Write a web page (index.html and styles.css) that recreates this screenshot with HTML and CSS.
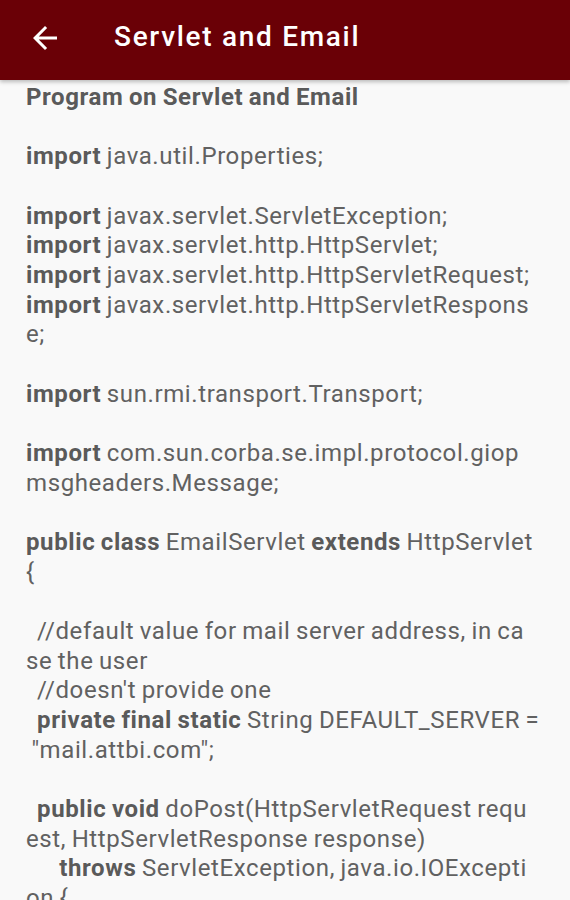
FILE: index.html
```html
<!DOCTYPE html>
<html>
    <head>
        <title>Servlet and Email</title>
        <link rel="stylesheet" href="styles.css">
    </head>
    <body>
        <div class="app-bar">
            <button class="back-btn" aria-label="Back">
                <svg viewBox="0 0 24 24" fill="currentColor" aria-hidden="true">
                    <path d="M20 11H7.83l5.59-5.59L12 4l-8 8 8 8 1.41-1.41L7.83 13H20v-2z" />
                </svg>
            </button>
            <h1 class="title">Servlet and Email</h1>
        </div>

        <div class="content">
<pre class="program"><b>Program on Servlet and Email</b>

<b>import</b> java.util.Properties;

<b>import</b> javax.servlet.ServletException;
<b>import</b> javax.servlet.http.HttpServlet;
<b>import</b> javax.servlet.http.HttpServletRequest;
<b>import</b> javax.servlet.http.HttpServletRespons
e;

<b>import</b> sun.rmi.transport.Transport;

<b>import</b> com.sun.corba.se.impl.protocol.giop
msgheaders.Message;

<b>public class</b> EmailServlet <b>extends</b> HttpServlet
{

  //default value for mail server address, in ca
se the user
  //doesn't provide one
  <b>private final static</b> String DEFAULT_SERVER =
 "mail.attbi.com";

  <b>public void</b> doPost(HttpServletRequest requ
est, HttpServletResponse response)
      <b>throws</b> ServletException, java.io.IOExcepti
on {</pre>
        </div>
    </body>
</html>
```

FILE: styles.css
```css
:root {
    --bar-red: #6a0006;
    --bg: #f9f9f9;
    --text: #616161;
}

body {
    margin: 0;
    width: 570px;
    height: 900px;
    overflow: hidden;
    background-color: var(--bg);
    font-family: Roboto, 'Noto Sans', sans-serif;
}

.app-bar {
    height: 80px;
    box-sizing: border-box;
    padding-bottom: 5px;
    background-color: var(--bar-red);
    display: flex;
    align-items: center;
    box-shadow: 0 2px 4px rgba(0, 0, 0, 0.25);
    position: relative;
}

.back-btn {
    background: none;
    border: none;
    padding: 0;
    margin-left: 27px;
    width: 36px;
    height: 36px;
    color: #ffffff;
    display: flex;
    align-items: center;
    justify-content: center;
    cursor: pointer;
}

.back-btn svg {
    width: 36px;
    height: 36px;
}

.title {
    margin: 0 0 2px 51px;
    font-size: 28px;
    font-weight: 500;
    color: #ffffff;
    letter-spacing: 1.7px;
}

.content {
    padding: 3px 10px 0 26px;
}

.program {
    margin: 0;
    font-family: Roboto, 'Noto Sans', sans-serif;
    font-size: 24px;
    line-height: 29.67px;
    letter-spacing: 0.6px;
    word-spacing: -1px;
    color: var(--text);
    white-space: pre;
}

.program b {
    font-weight: 700;
    color: #5a5a5a;
}
```
